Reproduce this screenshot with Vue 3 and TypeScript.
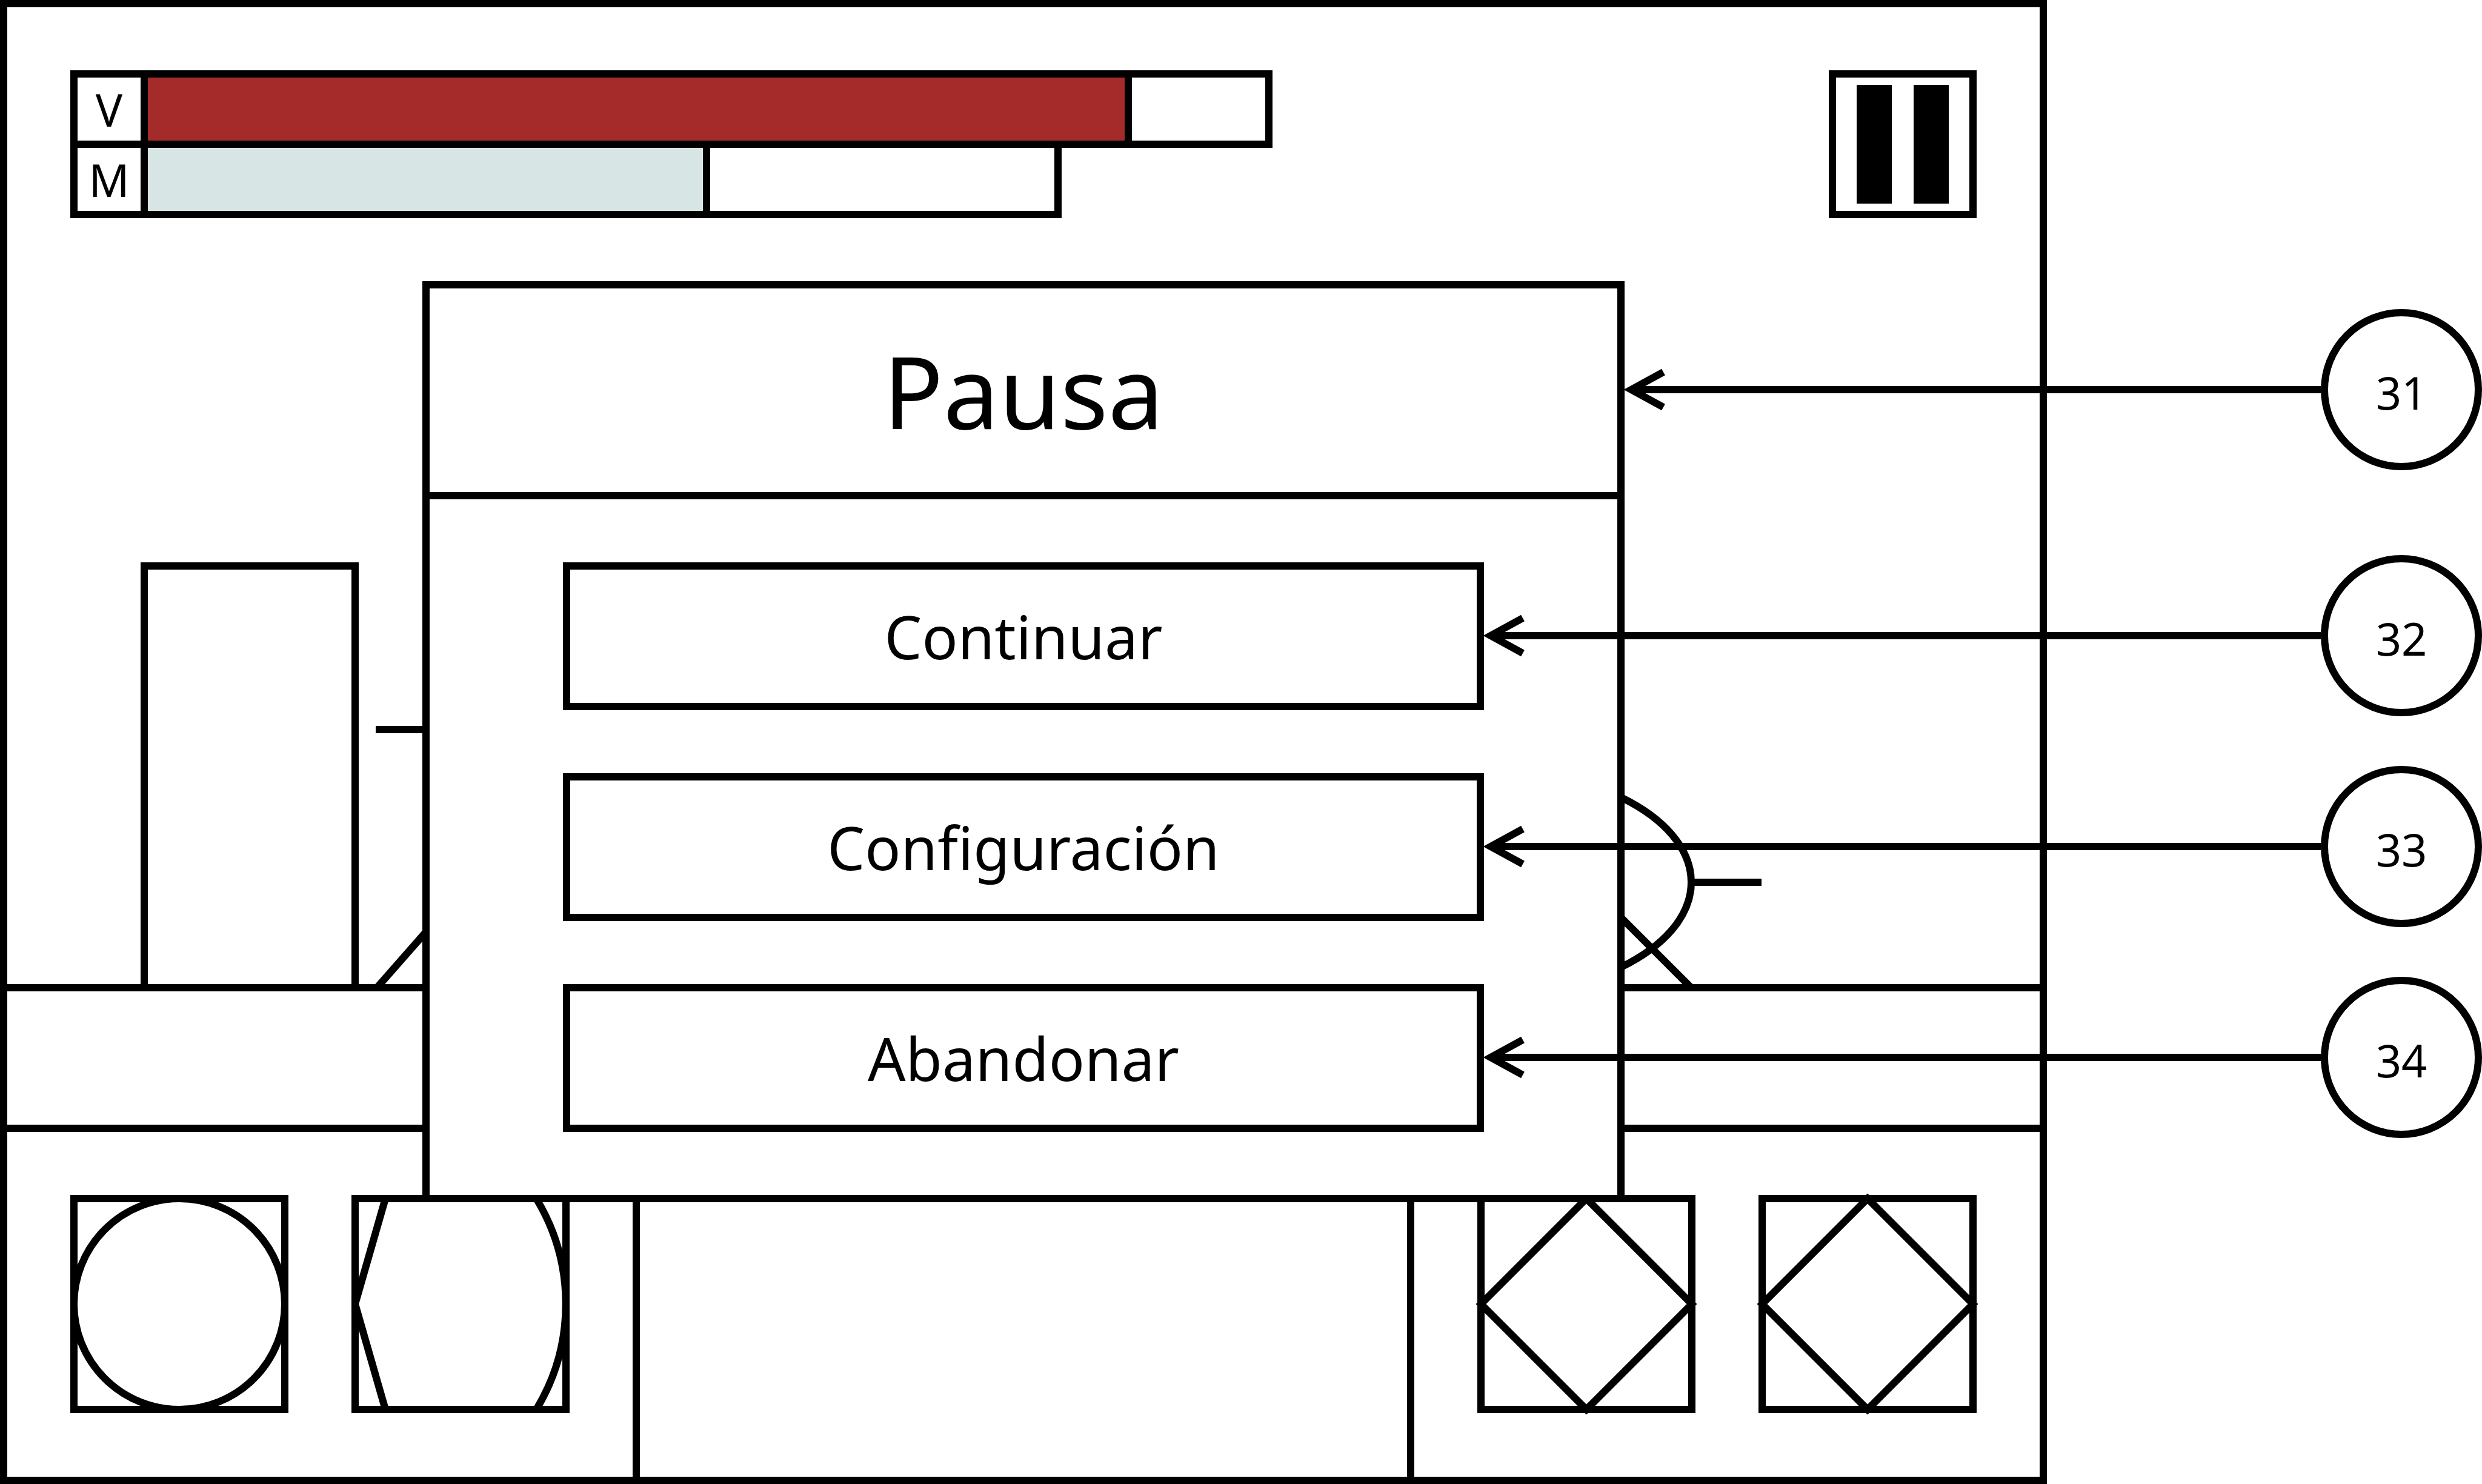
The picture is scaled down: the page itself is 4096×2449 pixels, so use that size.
<script setup lang="ts">
interface Meter {
  label: string
  name: string
  kind: string
  value: number
  max: number
}

interface Callout {
  id: number
  kind: string
}

const meters: Meter[] = [
  { label: 'V', name: 'Vida', kind: 'life', value: 14, max: 16 },
  { label: 'M', name: 'Maná', kind: 'mana', value: 8, max: 13 },
]

const actions: string[] = ['Continuar', 'Configuración', 'Abandonar']

const callouts: Callout[] = [
  { id: 31, kind: 'to-title' },
  { id: 32, kind: 'to-first' },
  { id: 33, kind: 'to-second' },
  { id: 34, kind: 'to-third' },
]

const fillWidth = (m: Meter): string => `calc((100% + 12px) * ${m.value} / ${m.max})`
</script>

<template>
  <div class="page">
    <main class="stage">
      <header class="hud">
        <div class="meters">
          <div v-for="m in meters" :key="m.label" class="meter" :class="m.kind">
            <span class="meter-label">{{ m.label }}</span>
            <div
              class="track"
              role="meter"
              :aria-label="m.name"
              aria-valuemin="0"
              :aria-valuenow="m.value"
              :aria-valuemax="m.max"
            >
              <div class="fill" :style="{ width: fillWidth(m) }"></div>
            </div>
          </div>
        </div>
        <button class="pause" type="button" aria-label="Pausa">
          <span class="pause-bar"></span>
          <span class="pause-bar"></span>
        </button>
      </header>

      <svg class="scene" viewBox="12 360 3354 1508" aria-hidden="true">
        <rect x="238" y="934" width="348" height="696" />
        <path d="M12 1630H3366M12 1862H3366" />
        <path d="M620 1204H738M622 1630L738 1498" />
        <ellipse cx="2443" cy="1456" rx="348" ry="188" />
        <path d="M2791 1456H2907M2675 1514L2791 1630" />
      </svg>

      <footer class="controls">
        <div class="pad pad-left">
          <button class="slot" type="button" aria-label="Mover">
            <svg viewBox="0 0 360 360">
              <rect x="6" y="6" width="348" height="348" />
              <circle cx="180" cy="180" r="174" />
            </svg>
          </button>
          <button class="slot" type="button" aria-label="Escudo">
            <svg viewBox="0 0 360 360">
              <rect x="6" y="6" width="348" height="348" />
              <path d="M56 6L6 180L56 354M305 6A335 335 0 0 1 305 354" />
            </svg>
          </button>
        </div>
        <div class="pad pad-right">
          <button class="slot" type="button" aria-label="Atacar">
            <svg viewBox="0 0 360 360">
              <rect x="6" y="6" width="348" height="348" />
              <path d="M180 6L354 180L180 354L6 180Z" />
            </svg>
          </button>
          <button class="slot" type="button" aria-label="Magia">
            <svg viewBox="0 0 360 360">
              <rect x="6" y="6" width="348" height="348" />
              <path d="M180 6L354 180L180 354L6 180Z" />
            </svg>
          </button>
        </div>
      </footer>

      <div class="overlay">
        <section class="dialog" role="dialog" aria-labelledby="dialog-title">
          <h1 id="dialog-title" class="title">Pausa</h1>
          <div class="actions">
            <button v-for="a in actions" :key="a" class="action" type="button">{{ a }}</button>
          </div>
        </section>
      </div>
    </main>

    <div v-for="c in callouts" :key="c.id" class="callout" :class="c.kind">
      <svg class="arrow" viewBox="0 0 72 72" aria-hidden="true">
        <path d="M65 7L12 36L65 65M12 36H72" />
      </svg>
      <div class="leader"></div>
      <span class="badge">{{ c.id }}</span>
    </div>
  </div>
</template>

<style>
body {
  margin: 0;
  background: #fff;
}
</style>

<style scoped>
.page {
  --unit: 116px;
  --line: 12px;
  --gap: 104px;
  position: relative;
  display: flex;
  min-height: 100vh;
  padding-right: 718px;
  box-sizing: border-box;
  color: #000;
  font-family: "Noto Sans", "Open Sans", sans-serif;
  font-size: 74px;
}

.page * {
  box-sizing: border-box;
}

button {
  margin: 0;
  padding: 0;
  border: 0;
  border-radius: 0;
  background: #fff;
  color: inherit;
  font: inherit;
}

svg {
  display: block;
  fill: none;
  stroke: #000;
  stroke-width: 12;
}

.stage {
  position: relative;
  display: flex;
  flex: 1;
  flex-direction: column;
  border: var(--line) solid #000;
}

.hud {
  display: flex;
  justify-content: space-between;
  padding: var(--gap) var(--gap) 0;
}

.meter {
  display: flex;
  height: 128px;
}

.meter + .meter {
  margin-top: -12px;
}

.meter-label {
  display: flex;
  align-items: center;
  justify-content: center;
  width: 128px;
  border: var(--line) solid #000;
}

.track {
  margin-left: -12px;
  border: var(--line) solid #000;
}

.life .track {
  width: calc(var(--unit) * 16 + var(--line));
}

.mana .track {
  width: calc(var(--unit) * 13 + var(--line));
}

.fill {
  height: 100%;
  border-right: var(--line) solid #000;
}

.life .fill {
  background: #a52a2a;
}

.mana .fill {
  background: #d8e5e5;
}

.pause {
  display: flex;
  align-items: center;
  justify-content: center;
  gap: 36px;
  width: 244px;
  height: 244px;
  border: var(--line) solid #000;
}

.pause-bar {
  width: 58px;
  height: 196px;
  background: #000;
}

.scene {
  width: 100%;
}

.controls {
  display: flex;
  flex: 1;
  justify-content: space-between;
}

.pad {
  display: flex;
  gap: var(--gap);
  padding: var(--gap);
}

.pad-left {
  border-right: var(--line) solid #000;
}

.pad-right {
  border-left: var(--line) solid #000;
}

.slot {
  width: 360px;
  height: 360px;
}

.slot svg {
  overflow: visible;
  width: 100%;
}

.overlay {
  position: absolute;
  inset: 0;
  display: flex;
  align-items: flex-start;
  justify-content: center;
  padding-top: 452px;
}

.dialog {
  width: 1984px;
  border: var(--line) solid #000;
  background: #fff;
}

.title {
  display: flex;
  align-items: center;
  justify-content: center;
  height: 348px;
  margin: 0;
  border-bottom: var(--line) solid #000;
  font-size: 164px;
  font-weight: 400;
}

.actions {
  display: flex;
  flex-direction: column;
  gap: var(--gap);
  padding: var(--gap) 220px;
}

.action {
  height: 244px;
  border: var(--line) solid #000;
  font-size: 98px;
}

.callout {
  position: absolute;
  right: 0;
  left: calc(50% + 400px);
  display: flex;
  align-items: center;
}

.to-title {
  top: 510px;
  left: calc(50% + 632px);
}

.to-first {
  top: 916px;
}

.to-second {
  top: 1264px;
}

.to-third {
  top: 1612px;
}

.arrow {
  flex: none;
  overflow: visible;
  width: 72px;
  height: 72px;
}

.leader {
  flex: 1;
  height: var(--line);
  background: #000;
}

.badge {
  display: flex;
  align-items: center;
  justify-content: center;
  width: 266px;
  height: 266px;
  padding-top: 8px;
  border: var(--line) solid #000;
  border-radius: 50%;
}
</style>
